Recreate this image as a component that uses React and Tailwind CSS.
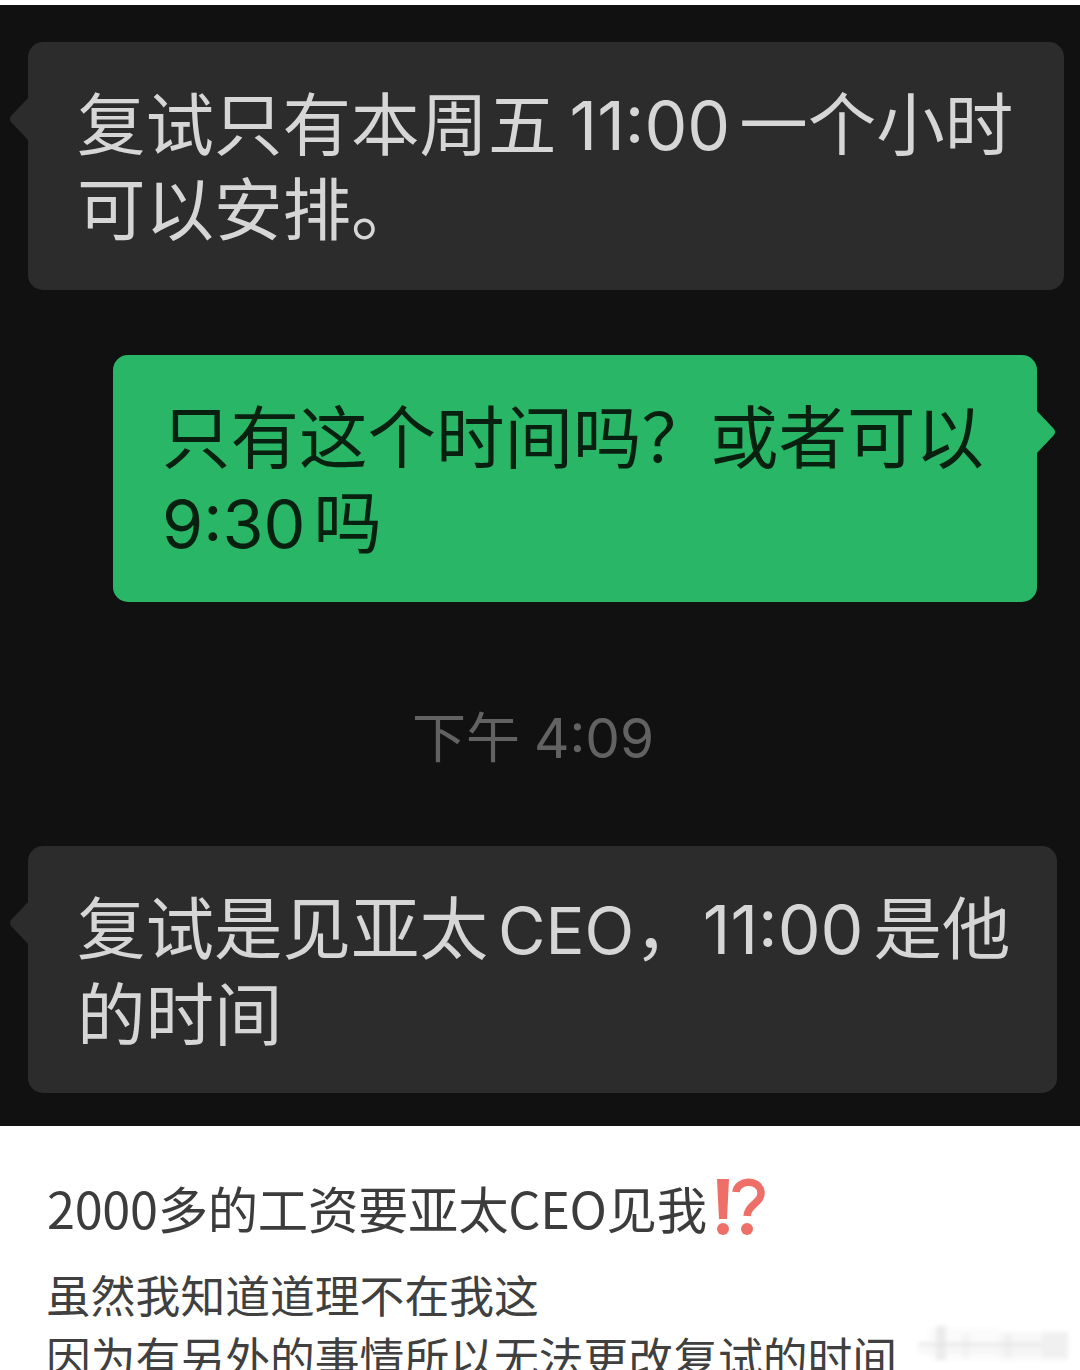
const chatFont = { fontFamily: 'Inter, "Noto Sans CJK SC", sans-serif' };
const postFont = { fontFamily: '"Noto Sans CJK SC", "Noto Sans", sans-serif' };

function Tail({ side, color }) {
  return (
    <svg
      width="20"
      height="44"
      viewBox="0 0 20 44"
      className={side === "left" ? "absolute top-[55px] -left-[19px]" : "absolute top-[55px] -right-[19px]"}
      aria-hidden="true"
    >
      {side === "left" ? (
        <path d="M20 0 L2 19 Q0 22 2 25 L20 44 Z" fill={color} />
      ) : (
        <path d="M0 0 L18 19 Q20 22 18 25 L0 44 Z" fill={color} />
      )}
    </svg>
  );
}

function Bubble({ className, children, side, color }) {
  return (
    <div className={`relative rounded-[15px] pl-[49px] pt-[41px] text-[68.5px] leading-[85px] ${className}`}>
      <Tail side={side} color={color} />
      <div className="whitespace-nowrap">{children}</div>
    </div>
  );
}

export default function App() {
  return (
    <div className="w-[1080px] h-[1370px] overflow-hidden bg-white relative">
      <div className="h-[5px] bg-white" />
      <div className="h-[1121px] bg-[#111112] pt-[37px] flex flex-col items-start" style={chatFont}>
        <Bubble className="ml-[28px] w-[1036px] h-[248px] bg-[#2c2c2c] text-[#d6d6d6]" side="left" color="#2c2c2c">
          复试只有本周五<span className="ml-[13px] mr-[9px] text-[68px]">11:00</span>一个小时
          <br />
          可以安排。
        </Bubble>
        <Bubble className="ml-[113px] mt-[65px] w-[924px] h-[247px] bg-[#29b666] text-[#07200f]" side="right" color="#29b666">
          只有这个时间吗？或者可以
          <br />
          <span className="mr-[8px] text-[66.5px]">9:30</span>吗
        </Bubble>
        <div className="w-full mt-[92px] pl-[412px] h-[88px] text-[54px] leading-[88px] text-[#626262] whitespace-nowrap">
          下午<span className="ml-[14px] text-[55px]">4:09</span>
        </div>
        <div className="h-[64px]" />
        <Bubble className="ml-[28px] w-[1029px] h-[247px] bg-[#2c2c2c] text-[#d6d6d6]" side="left" color="#2c2c2c">
          复试是见亚太<span className="ml-[10px] text-[65px]">CEO</span>，<span className="text-[68px]">11:00</span>
          <span className="ml-[10px]">是他</span>
          <br />
          的时间
        </Bubble>
      </div>
      <div className="pl-[47px] pt-[52px] text-[#3a3a3a]" style={postFont}>
        <div className="flex items-center h-[64px] text-[50.4px] leading-[64px] text-[#3c3c3c] whitespace-nowrap">
          <span className="tracking-[-0.3px] -mt-[4px]">2000多的工资要亚太CEO见我</span>
          <svg width="50" height="60" viewBox="0 0 50 60" className="ml-[9px] -mt-[6px]" aria-hidden="true">
            <path d="M1 2 H13 L11 42 H3 Z" fill="#ee6f67" />
            <circle cx="7" cy="52" r="6" fill="#ee6f67" />
            <path d="M20 15 C21 3 43 1 45 15 C46 26 32 27 31 39" fill="none" stroke="#ee6f67" strokeWidth="7.5" />
            <circle cx="31" cy="52" r="6" fill="#ee6f67" />
          </svg>
        </div>
        <div className="mt-[21px] -ml-[1px] text-[44.8px] leading-[62px] text-[#404040] whitespace-nowrap">
          虽然我知道道理不在我这
          <br />
          因为有另外的事情所以无法更改复试的时间
        </div>
      </div>
      <svg width="160" height="46" viewBox="0 0 160 46" className="absolute left-[914px] top-[1322px]" aria-hidden="true">
        <defs>
          <filter id="wm" x="-20%" y="-50%" width="140%" height="200%">
            <feGaussianBlur stdDeviation="2" />
          </filter>
        </defs>
        <g filter="url(#wm)">
          <rect x="14" y="6" width="70" height="32" fill="#fbfbfb" />
          <rect x="84" y="10" width="70" height="28" fill="#f8f8f8" />
          <rect x="22" y="4" width="10" height="34" fill="#ebebeb" />
          <rect x="48" y="12" width="8" height="24" fill="#f4f4f4" />
          <rect x="90" y="12" width="8" height="24" fill="#f0f0f0" />
          <rect x="4" y="21" width="150" height="3" fill="#e4e4e4" />
          <rect x="4" y="28" width="150" height="2" fill="#eeeeee" />
          <rect x="128" y="10" width="26" height="26" fill="#f0f0f0" />
        </g>
      </svg>
    </div>
  );
}
